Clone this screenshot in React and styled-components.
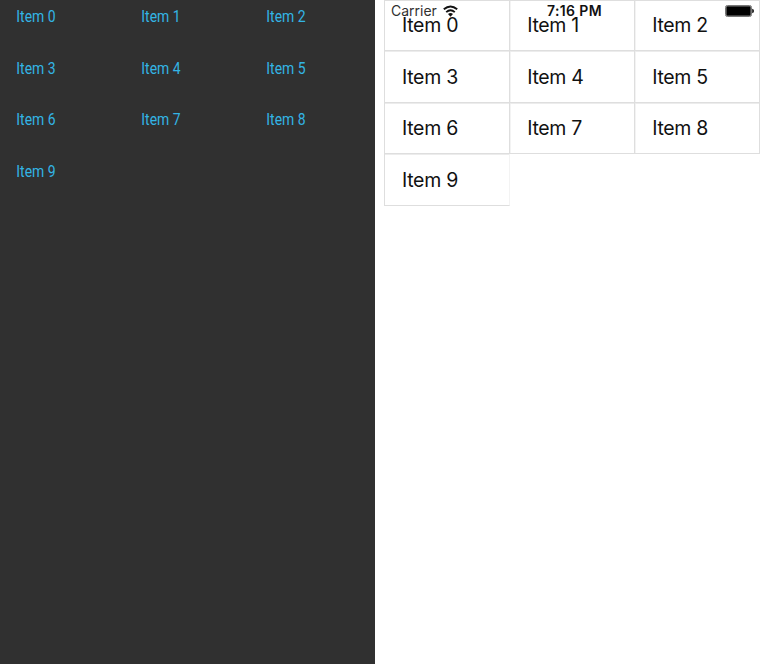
import React from "react";
import styled, { createGlobalStyle } from "styled-components";

const GlobalStyle = createGlobalStyle`
  * { box-sizing: border-box; }
  body { margin: 0; background: #fff; overflow: hidden; }
`;

const Page = styled.main`
  display: flex;
  gap: 9px;
  width: 760px;
  height: 666px;
`;

const AndroidScreen = styled.section`
  width: 375px;
  height: 664px;
  background: #303030;
`;

const AndroidGrid = styled.div`
  display: grid;
  grid-template-columns: repeat(3, 125.2px);
  grid-auto-rows: 51.6px;
`;

const AndroidItem = styled.div`
  padding: 6px 0 0 16px;
  color: #33b5e5;
  font: 400 17px/21px Roboto, sans-serif;
`;

const CondensedLabel = styled.span`
  display: inline-block;
  white-space: nowrap;
  transform: translateX(0.3px) scaleX(0.82);
  transform-origin: left center;
`;

const IosScreen = styled.section`
  position: relative;
  width: 376px;
  height: 666px;
  background: #fff;
`;

const IosGrid = styled.div`
  display: grid;
  grid-template-columns: 126px 125px 125px;
  grid-template-rows: 51px 52px 51px 52px;
`;

const IosItem = styled.div`
  display: flex;
  align-items: center;
  padding: 0 0 ${(p) => (p.$lowered ? 0 : 1)}px ${(p) => (p.$first ? 17 : 17.2)}px;
  border: solid #dedede;
  border-width: ${(p) => (p.$top ? 1 : 0)}px 1px 1px ${(p) => (p.$first ? 1 : 0)}px;
  border-right-color: ${(p) => (p.$last ? "#f3f3f3" : "#dedede")};
  box-shadow:
    inset 0 ${(p) => (p.$top ? 0 : 1)}px #ececec,
    inset ${(p) => (p.$first ? 0 : 1)}px 0 #f3f3f3;
  color: #111;
  font: 400 19.5px/24px Inter, sans-serif;
  letter-spacing: -0.3px;
  white-space: nowrap;
`;

const StatusBar = styled.header`
  position: absolute;
  inset: 0 0 auto 0;
  display: grid;
  grid-template-columns: 1fr auto 1fr;
  align-items: center;
  height: 22px;
  padding: 0 6px 0 7px;
  color: #111;
`;

const CarrierGroup = styled.div`
  display: flex;
  align-items: center;
  gap: 6px;
  font: 400 14px/20px Inter, sans-serif;
  color: #303030;
`;

const Clock = styled.time`
  padding-left: 4px;
  font: 600 14px/20px Inter, sans-serif;
  letter-spacing: 0.4px;
`;

const Battery = styled.svg`
  justify-self: end;
  display: block;
`;

const items = Array.from({ length: 10 }, (_, i) => `Item ${i}`);

function WifiIcon() {
  return (
    <svg width="15" height="12" viewBox="0 0 15 12" fill="none" stroke="#111" strokeWidth="1.9">
      <path d="M.8 4.3Q7.5-1.4 14.2 4.3" />
      <path d="M3.2 7.1Q7.5 3.3 11.8 7.1" />
      <path d="M7.5 11.8 5 9Q7.5 6.9 10 9Z" fill="#111" stroke="none" />
    </svg>
  );
}

function BatteryIcon() {
  return (
    <Battery width="29" height="12" viewBox="0 0 29 12">
      <rect x=".5" y=".5" width="26" height="11" rx="1.8" fill="#fff" stroke="#777" />
      <rect x="1.3" y="1.3" width="24.4" height="9.4" rx=".8" fill="#000" />
      <path d="M27.2 3.8Q29 4.2 29 6T27.2 8.2Z" fill="#111" />
    </Battery>
  );
}

export default function App() {
  return (
    <>
      <GlobalStyle />
      <Page>
        <AndroidScreen>
          <AndroidGrid>
            {items.map((item) => (
              <AndroidItem key={item}>
                <CondensedLabel>{item}</CondensedLabel>
              </AndroidItem>
            ))}
          </AndroidGrid>
        </AndroidScreen>
        <IosScreen>
          <IosGrid>
            {items.map((item, i) => (
              <IosItem
                key={item}
                $first={i % 3 === 0}
                $top={i < 3}
                $lowered={Math.floor(i / 3) % 2 === 1}
                $last={i === 9}
              >
                {item}
              </IosItem>
            ))}
          </IosGrid>
          <StatusBar>
            <CarrierGroup>
              Carrier
              <WifiIcon />
            </CarrierGroup>
            <Clock>7:16 PM</Clock>
            <BatteryIcon />
          </StatusBar>
        </IosScreen>
      </Page>
    </>
  );
}
